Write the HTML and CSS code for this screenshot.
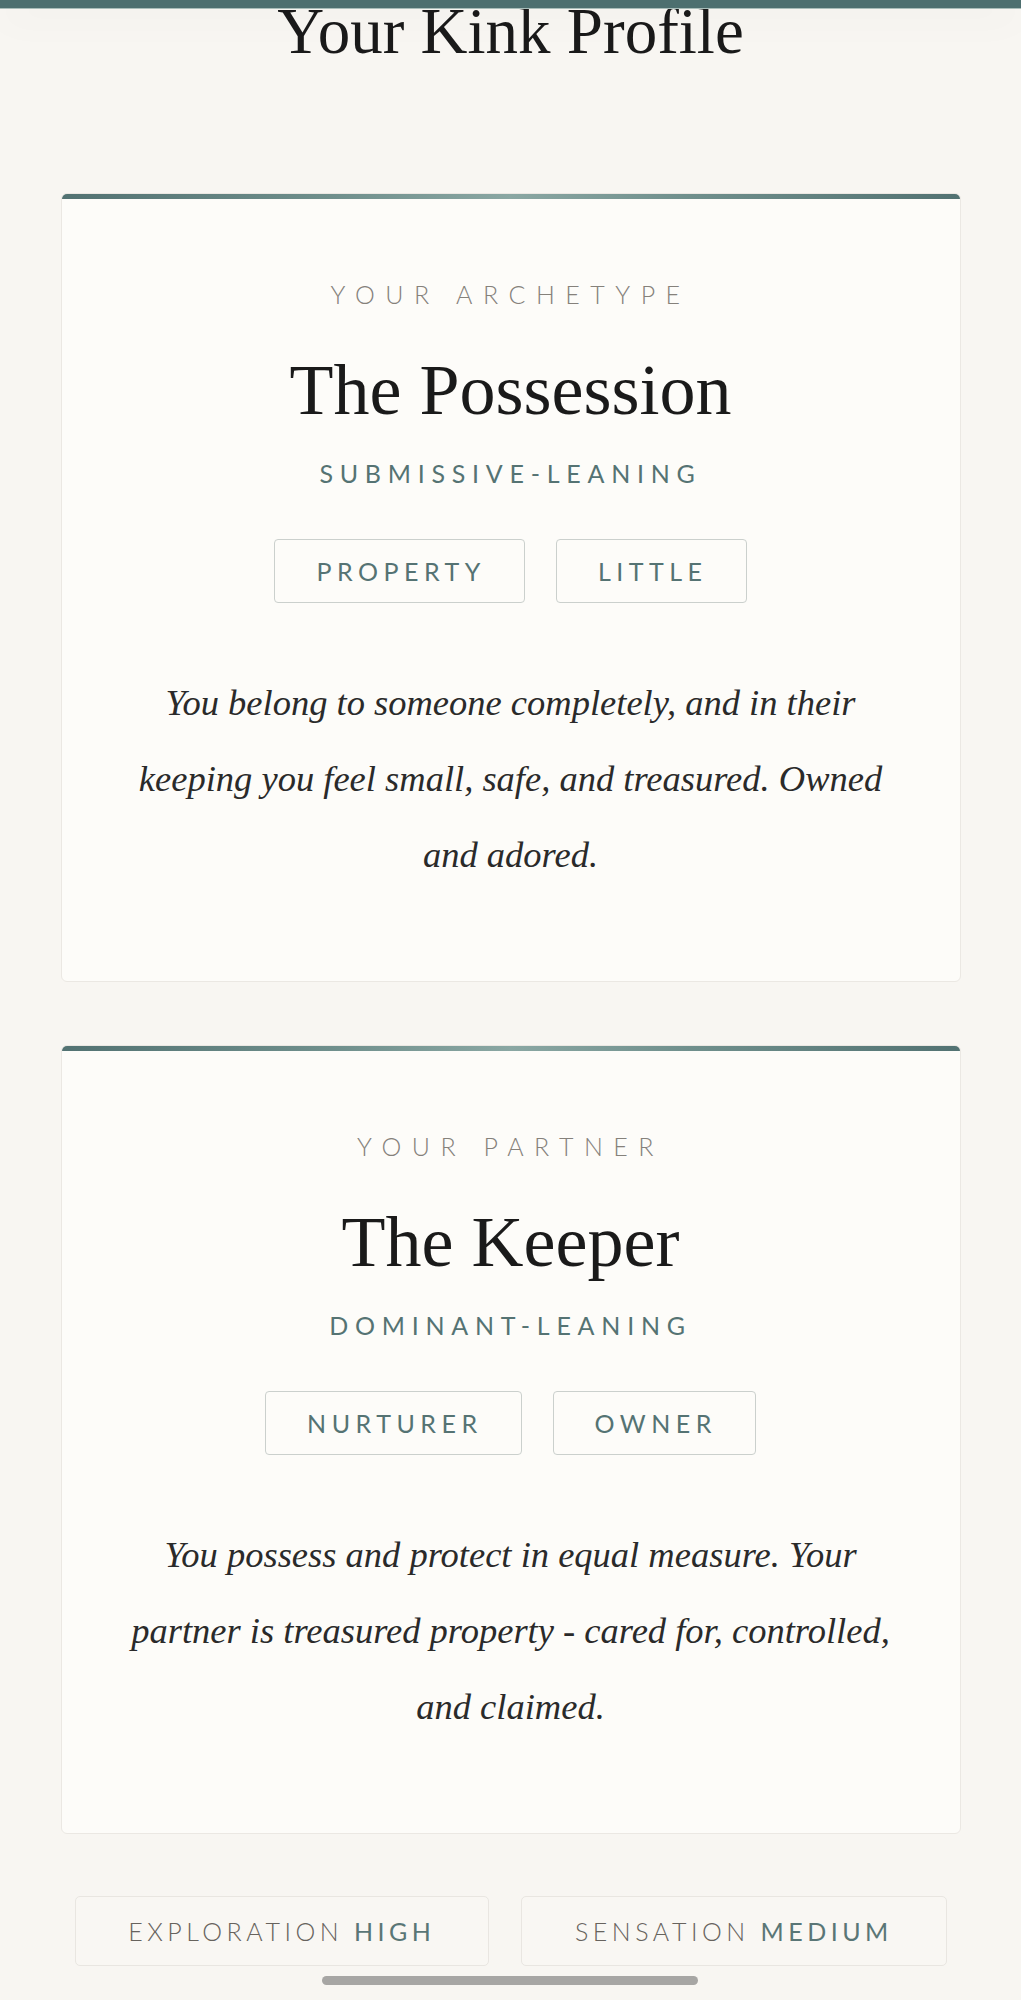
FILE: index.html
```html
<!DOCTYPE html>
<html lang="en">
<head>
<meta charset="utf-8">
<title>Your Kink Profile</title>
<link rel="stylesheet" href="styles.css">
</head>
<body>
<div class="topbar"></div>
<main class="page">
  <h1 class="page-title">Your Kink Profile</h1>

  <section class="card">
    <p class="card-label">Your Archetype</p>
    <h2 class="card-name">The Possession</h2>
    <p class="card-lean">Submissive-Leaning</p>
    <div class="chips">
      <span class="chip">Property</span>
      <span class="chip">Little</span>
    </div>
    <p class="card-desc">You belong to someone completely, and in their keeping you feel small, safe, and treasured. Owned and adored.</p>
  </section>

  <section class="card">
    <p class="card-label">Your Partner</p>
    <h2 class="card-name">The Keeper</h2>
    <p class="card-lean">Dominant-Leaning</p>
    <div class="chips">
      <span class="chip">Nurturer</span>
      <span class="chip">Owner</span>
    </div>
    <p class="card-desc">You possess and protect in equal measure. Your partner is treasured property - cared for, controlled, and claimed.</p>
  </section>

  <div class="stats">
    <div class="stat"><span class="stat-key">Exploration</span> <span class="stat-val">High</span></div>
    <div class="stat"><span class="stat-key">Sensation</span> <span class="stat-val">Medium</span></div>
  </div>
</main>
<div class="scroll-thumb"></div>
</body>
</html>
```

FILE: styles.css
```css
* { box-sizing: border-box; }

html, body {
  margin: 0;
  padding: 0;
}

body {
  background: #f8f6f2;
  color: #1c1c1c;
  font-family: "Liberation Serif", "Times New Roman", serif;
  min-height: 2000px;
}

.topbar {
  position: fixed;
  top: 0;
  left: 0;
  right: 0;
  height: 9px;
  background: #4d6f6f;
  border-bottom: 1px solid #a9bdb9;
  box-shadow: 0 6px 40px rgba(60, 50, 40, 0.07);
  z-index: 10;
}

.page {
  width: 900px;
  margin: 0 auto;
  display: flex;
  flex-direction: column;
}

.page-title {
  margin: 0 0 130px;
  font-weight: 400;
  font-size: 65px;
  line-height: 63px;
  text-align: center;
  color: #1a1a1a;
}

.card {
  background: #fdfcf9;
  border: 1px solid #ebe8e3;
  border-radius: 6px;
  overflow: hidden;
  padding: 0 56px 88px;
  text-align: center;
  margin-bottom: 63px;
  display: flex;
  flex-direction: column;
  align-items: center;
}

.card::before {
  content: "";
  display: block;
  align-self: stretch;
  height: 6px;
  margin: -1px -57px 0;
  background: linear-gradient(90deg, #527272 0%, #6f8f8c 30%, #8aa7a3 50%, #6f8f8c 70%, #527272 100%);
}

.card-label {
  margin: 80px 0 0;
  font-family: Lato, "Liberation Sans", sans-serif;
  font-weight: 300;
  font-size: 25px;
  line-height: 30px;
  letter-spacing: 0.42em;
  text-transform: uppercase;
  color: #85817b;
}

.card-name {
  margin: 38px 0 0;
  font-weight: 400;
  font-size: 72px;
  line-height: 86px;
  color: #1a1a1a;
}

.card-lean {
  margin: 25px 0 0;
  font-family: Lato, "Liberation Sans", sans-serif;
  font-weight: 400;
  font-size: 25px;
  line-height: 30px;
  letter-spacing: 0.27em;
  text-transform: uppercase;
  color: #557373;
}

.chips {
  margin-top: 51px;
  display: flex;
  justify-content: center;
  gap: 31px;
}

.chip {
  display: block;
  border: 1.5px solid #cbd0cd;
  border-radius: 4px;
  padding: 16px 38px 16px 41px;
  font-family: Lato, "Liberation Sans", sans-serif;
  font-size: 25px;
  line-height: 30px;
  letter-spacing: 0.22em;
  text-transform: uppercase;
  color: #557373;
}

.card-desc {
  margin: 62px 0 0;
  font-style: italic;
  font-size: 36.5px;
  line-height: 76px;
  color: #2a2a2a;
}

.stats {
  display: flex;
  gap: 32px;
  padding: 0 14px;
  margin-top: -1px;
}

.stat {
  flex: 1 1 auto;
  background: #f9f7f3;
  border: 1.5px solid #e9e6e1;
  border-radius: 5px;
  padding: 19px 0;
  text-align: center;
  font-family: Lato, "Liberation Sans", sans-serif;
  font-size: 25px;
  line-height: 30px;
  letter-spacing: 0.18em;
  text-transform: uppercase;
  white-space: nowrap;
}

.stat-key {
  font-weight: 300;
  color: #67635d;
}

.stat-val {
  font-weight: 400;
  color: #5a7676;
}

.scroll-thumb {
  position: fixed;
  left: 322px;
  top: 1976px;
  width: 376px;
  height: 9px;
  border-radius: 5px;
  background: #a7a6a4;
}
```
